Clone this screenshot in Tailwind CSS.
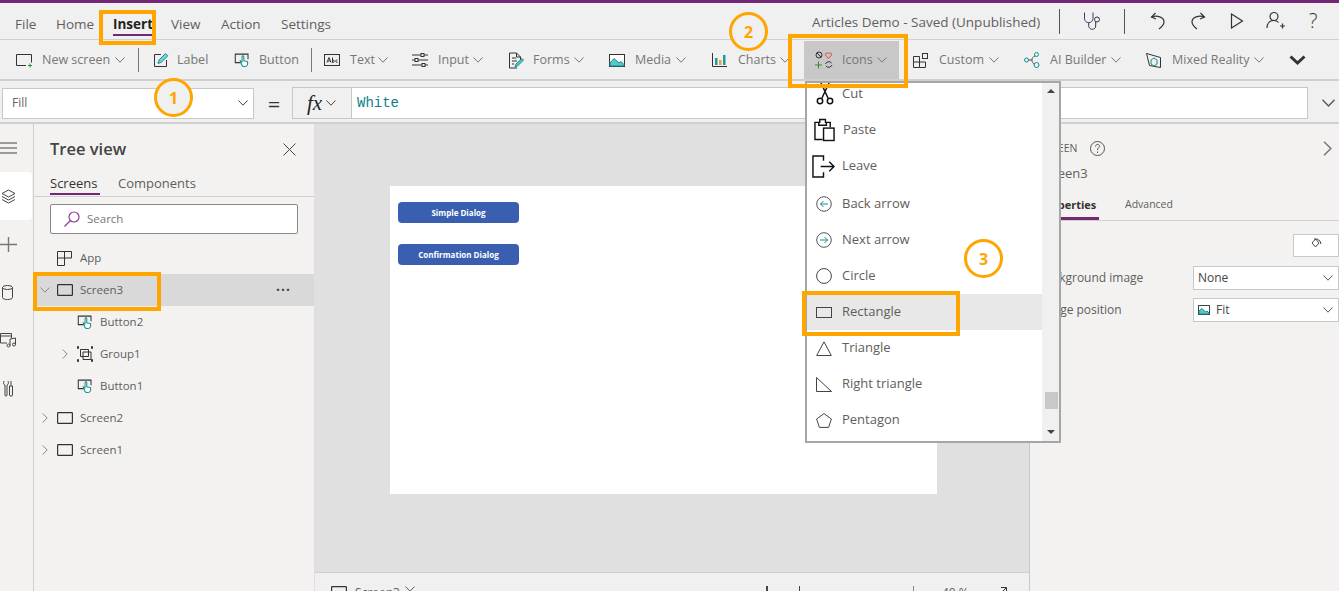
<!DOCTYPE html>
<html lang="en">
<head>
    <meta charset="UTF-8">
    <title>Articles Demo - Power Apps</title>
    <script src="https://cdn.jsdelivr.net/npm/@tailwindcss/browser@4"></script>
</head>
<body class="relative h-screen overflow-hidden bg-[#f0f0f0] text-[13px] text-[#605e5c] font-['Open_Sans',sans-serif]">
    <svg class="hidden">
        <symbol id="chev" viewBox="0 0 10 6"><path d="M.5.5 5 5.2 9.5.5" fill="none" stroke="currentColor"/></symbol>
        <symbol id="chev-r" viewBox="0 0 6 10"><path d="M.7.5 5.2 5 .7 9.5" fill="none" stroke="currentColor"/></symbol>
        <symbol id="btn" viewBox="0 0 20 20">
            <path d="M9 12.5H1.5v-10h15v6" fill="none" stroke="#333" stroke-width="1.2"/>
            <path d="M9.5 5.5v6.2l-2-1.2 1.5 4.5c1 3 6 3 7-.5v-3.2l-4.5-1V5.5c0-1.3-2-1.3-2 0z" fill="#fff" stroke="#0f8f8f" stroke-width="1.2"/>
        </symbol>
        <symbol id="screen" viewBox="0 0 16 12"><rect x=".6" y=".6" width="14.8" height="10.8" rx=".6" fill="none" stroke="#333" stroke-width="1.2"/></symbol>
    </svg>

    <div class="h-[3px] bg-[#742774]"></div>

    <!-- Menu row -->
    <header class="flex items-center h-[37px] border-b border-[#d2d0ce] pl-[15px] pr-[19px] text-[13.5px] text-[#5f5f5f]">
        <nav class="flex items-center pt-[6px]">
            <span class="w-[41px]">File</span>
            <span class="w-[57px]">Home</span>
            <span class="relative w-[58px] font-bold text-[#222]">Insert<span class="absolute left-0 top-[20px] h-[2px] w-[39px] bg-[#742774]"></span></span>
            <span class="w-[50px]">View</span>
            <span class="w-[60px]">Action</span>
            <span>Settings</span>
        </nav>
        <div class="ml-auto flex items-center">
            <span class="w-[247px] whitespace-nowrap pt-[2px]">Articles Demo - Saved (Unpublished)</span>
            <span class="h-[25px] w-px bg-[#555]"></span>
            <svg class="ml-[23px] h-[20px] w-[20px] fill-none stroke-[#333]" viewBox="0 0 20 20"><path d="M1.5 1.5v6c0 5.500 8.500 5.500 8.500 0v-6" stroke="#5b2a6e"/><path d="M5.700 12v2.500c0 5 7 5 7 .5v-4"/><circle cx="14" cy="8.500" r="2.500"/></svg>
            <span class="ml-[21px] h-[25px] w-px bg-[#555]"></span>
            <svg class="ml-[25px] h-[18px] w-[16px] fill-none stroke-[#333]" viewBox="0 0 16 18" stroke-width="1.2"><path d="M5.500 1 1.500 5l4.500 2"/><path d="M1.500 5C7 3 14 5 14 10c0 3-2.500 5-5 7"/></svg>
            <svg class="ml-[24px] h-[18px] w-[16px] fill-none stroke-[#333]" viewBox="0 0 16 18" stroke-width="1.2"><path d="M10.500 1l4 4-4.500 2"/><path d="M14.500 5C9 3 2 5 2 10c0 3 2.500 5 5 7"/></svg>
            <svg class="ml-[24px] h-[16px] w-[14px] fill-none stroke-[#333]" viewBox="0 0 14 16" stroke-width="1.2"><path d="M1.500 1v14l11-7z"/></svg>
            <svg class="ml-[22px] h-[20px] w-[20px] fill-none stroke-[#333]" viewBox="0 0 20 20" stroke-width="1.2"><circle cx="8" cy="5.500" r="4"/><path d="M1 17c0-5 3-7.500 7-7.500 2 0 3.500 .7 4.500 2"/><path d="M14 15h5M16.500 12.500v5"/></svg>
            <span class="ml-[23px] w-[11px] text-[20px] leading-none font-light text-[#333]">?</span>
        </div>
    </header>

    <!-- Insert toolbar -->
    <div class="flex items-center h-[41px] border-b-2 border-[#d2d0ce] pl-[16px] pt-[1px] text-[12.5px] text-[#777] whitespace-nowrap">
        <svg class="h-[16px] w-[16px] fill-none stroke-[#333]" viewBox="0 0 16 16"><path d="M10 13.500H.5v-11h15v8"/><path d="M12 13.500h4M14 11.500v4" stroke="#2e8b3d"/></svg>
        <span class="ml-[10px] w-[73px]">New screen</span>
        <svg class="h-[6px] w-[10px]"><use href="#chev"/></svg>
        <span class="ml-[13px] h-[24px] w-px bg-[#777]"></span>

        <svg class="ml-[14px] h-[16px] w-[16px] fill-none stroke-[#333]" viewBox="0 0 16 16"><path d="M8 2.500H1.500v12h12V8"/><path d="M5 11.500l1-3.500 6.500-6.500 2.300 2.300L8.300 10.300z" fill="#7fcfcf" stroke="#0f8f8f"/></svg>
        <span class="ml-[8px] w-[57px]">Label</span>
        <svg class="h-[17px] w-[17px]"><use href="#btn"/></svg>
        <span class="ml-[8px] w-[39px]">Button</span>
        <span class="ml-[13px] h-[24px] w-px bg-[#777]"></span>

        <svg class="ml-[12px] h-[12px] w-[16px] fill-none stroke-[#333]" viewBox="0 0 16 12"><rect x=".5" y=".5" width="15" height="11"/><path d="M3 8.500 5 3.500l2 5M4 7h2M8.500 3.500v5M8.500 6.500c2-1.500 2.500 2.500 0 2M13.500 6c-2-1-2.500 3 0 2.300"/></svg>
        <span class="ml-[10px] w-[28px]">Text</span>
        <svg class="h-[6px] w-[10px]"><use href="#chev"/></svg>

        <svg class="ml-[24px] h-[16px] w-[16px] fill-none stroke-[#333]" viewBox="0 0 16 16"><path d="M0 3h9M12 3h4M0 8h3M6 8h10M0 13h10M13 13h3"/><rect x="9" y="1.500" width="3" height="3"/><rect x="3" y="6.500" width="3" height="3"/><rect x="10" y="11.500" width="3" height="3"/></svg>
        <span class="ml-[10px] w-[35px]">Input</span>
        <svg class="h-[6px] w-[10px]"><use href="#chev"/></svg>

        <svg class="ml-[25px] h-[17px] w-[16px] fill-none stroke-[#333]" viewBox="0 0 16 17"><path d="M9 16H1.500V1h7l4 4v3M8.500 1v4h4M4 6h4M4 9h5M4 12h2"/><path d="M7 15l1-3 6-5.500 1.500 1.500-6 6z" fill="#5cc5c5" stroke="#0f8f8f"/></svg>
        <span class="ml-[9px] w-[41px]">Forms</span>
        <svg class="h-[6px] w-[10px]"><use href="#chev"/></svg>

        <svg class="ml-[25px] h-[13px] w-[16px] fill-none stroke-[#333]" viewBox="0 0 16 13"><rect x=".5" y=".5" width="15" height="12" fill="#fff"/><path d="M1 12V9l4-4.500L10 9l2-1.500 3 3V12z" fill="#5cc5c5" stroke="#0f8f8f"/></svg>
        <span class="ml-[10px] w-[41px]">Media</span>
        <svg class="h-[6px] w-[10px]"><use href="#chev"/></svg>

        <svg class="ml-[26px] h-[14px] w-[15px]" viewBox="0 0 15 14"><path d="M.5 0v13.500H15" fill="none" stroke="#333"/><path d="M3 5h2.500v7H3z" fill="#1e9aa0"/><path d="M7 7h2.500v5H7z" fill="#e8a33d"/><path d="M11 2h2.500v10H11z" fill="#1e9aa0"/></svg>
        <span class="ml-[11px] w-[42px]">Charts</span>
        <svg class="h-[6px] w-[10px]"><use href="#chev"/></svg>

        <div class="ml-[14px] flex h-[38px] w-[95px] items-center bg-[#c8c8c8] pl-[11px]">
            <svg class="h-[18px] w-[18px]" viewBox="0 0 18 18"><circle cx="4" cy="4" r="3" fill="none" stroke="#333"/><path d="M2 2l4 4" stroke="#333"/><path d="M13.500 7.500 10.500 4c-1-2 2-3 3-1 1-2 4-1 3 1z" fill="none" stroke="#d9503f"/><path d="M0 14h7M3.500 10.500v7" stroke="#2e8b3d"/><path d="M10.500 13a3.500 3.500 0 0 1 6-1M17 14a3.500 3.500 0 0 1-6 1" fill="none" stroke="#333"/></svg>
            <span class="ml-[9px] w-[35px]">Icons</span>
            <svg class="h-[6px] w-[10px]"><use href="#chev"/></svg>
        </div>

        <svg class="ml-[14px] h-[15px] w-[15px] fill-none stroke-[#333]" viewBox="0 0 15 15"><path d="M.5 3.500h6v11h-6zM.5 9h12v5.500h-6"/><rect x="9.500" y=".5" width="5" height="5"/></svg>
        <span class="ml-[11px] w-[50px]">Custom</span>
        <svg class="h-[6px] w-[10px]"><use href="#chev"/></svg>

        <svg class="ml-[25px] h-[16px] w-[16px] fill-none stroke-[#0f8f8f]" viewBox="0 0 16 16"><circle cx="2.500" cy="8" r="2"/><circle cx="12.500" cy="2.500" r="2"/><circle cx="12.500" cy="13" r="2.500"/><path d="M11 4c-4 1-4 7-.5 8M4.500 8H8" stroke="#555"/></svg>
        <span class="ml-[10px] w-[61px]">AI Builder</span>
        <svg class="h-[6px] w-[10px]"><use href="#chev"/></svg>

        <svg class="ml-[25px] h-[15px] w-[15px] fill-none stroke-[#333]" viewBox="0 0 15 15"><path d="M.5 .5l14 4v10l-11-2z"/><path d="M5 7l3-2 3 2v4l-3 2-3-2z" stroke="#0f8f8f"/></svg>
        <span class="ml-[11px] w-[82px]">Mixed Reality</span>
        <svg class="h-[6px] w-[10px]"><use href="#chev"/></svg>

        <svg class="ml-[25px] h-[10px] w-[17px] fill-none stroke-[#333]" viewBox="0 0 17 10" stroke-width="3"><path d="M1.500 1.500 8.500 8l7-6.500"/></svg>
    </div>

    <!-- Formula bar -->
    <div class="flex items-center h-[43px] border-b-2 border-[#d2d0ce] pl-[2px] pt-[3px]">
        <div class="flex h-[31px] w-[252px] items-center justify-between border border-[#c8c8c8] bg-white pl-[9px] pr-[5px] text-[12px] text-[#666]">
            <span>Fill</span>
            <svg class="h-[6px] w-[10px] text-[#444]"><use href="#chev"/></svg>
        </div>
        <span class="ml-[13px] w-[14px] text-center text-[22px] leading-none text-[#333]">=</span>
        <div class="ml-[11px] flex h-[32px] w-[60px] items-center border border-[#c8c8c8] pl-[14px]">
            <span class="font-['Liberation_Serif',serif] text-[21px] italic leading-none text-[#222]">fx</span>
            <svg class="ml-[4px] h-[6px] w-[10px] text-[#444]"><use href="#chev"/></svg>
        </div>
        <div class="flex h-[32px] w-[956px] items-center border-y border-r border-[#c8c8c8] bg-white pl-[5px] font-['Liberation_Mono',monospace] text-[14px] text-[#0e7f85]">White</div>
        <svg class="ml-[12px] h-[8px] w-[17px] text-[#555]"><use href="#chev"/></svg>
    </div>

    <!-- Workspace -->
    <div class="flex h-[467px]">
        <!-- Left rail -->
        <aside class="flex w-[34px] shrink-0 flex-col border-r border-[#d2d0ce] bg-[#f3f2f1]">
            <div class="flex h-[48px] w-[33px] items-center">
                <svg class="h-[12px] w-[17px] fill-none stroke-[#444]" viewBox="0 0 17 12"><path d="M0 1h17M0 6h17M0 11h17"/></svg>
            </div>
            <div class="flex h-[48px] w-[32px] items-center rounded-r-sm bg-white pl-[1px]">
                <svg class="h-[15px] w-[15px] fill-none stroke-[#444]" viewBox="0 0 15 15"><path d="M7.500 1 14 4.500 7.500 8 1 4.500zM1 7.500 7.500 11 14 7.500M1 10.500 7.500 14 14 10.500"/></svg>
            </div>
            <div class="flex h-[48px] items-center">
                <svg class="h-[15px] w-[17px] fill-none stroke-[#777]" viewBox="0 0 17 15" stroke-width="1.4"><path d="M0 7.500h17M8.500 0v15"/></svg>
            </div>
            <div class="flex h-[48px] items-center pl-[2px]">
                <svg class="h-[15px] w-[11px] fill-none stroke-[#444]" viewBox="0 0 11 15"><ellipse cx="5.500" cy="2.500" rx="5" ry="2"/><path d="M.5 2.500v10c0 2.700 10 2.700 10 0v-10"/></svg>
            </div>
            <div class="flex h-[48px] items-center">
                <svg class="h-[15px] w-[17px] fill-none stroke-[#444]" viewBox="0 0 17 15"><path d="M7 10H.5V.5h11V5M.5 3h11"/><circle cx="8.500" cy="12.500" r="1.500"/><circle cx="14" cy="11.500" r="1.500"/><path d="M10 12.500V6l5.500-1v6.500"/></svg>
            </div>
            <div class="flex h-[48px] items-center pl-[3px]">
                <svg class="h-[17px] w-[11px] fill-none stroke-[#444]" viewBox="0 0 11 17"><path d="M1 1c-1 2 0 4 1 4v10c0 1.500 2 1.500 2 0V5c1 0 2-2 1-4M8 1v5M6.500 6h3v9c0 1.500-3 1.500-3 0z"/></svg>
            </div>
        </aside>

        <!-- Tree view -->
        <section class="w-[281px] shrink-0 border-r border-[#e1dfdd] bg-[#f3f2f1]">
            <div class="flex items-center justify-between pl-[16px] pr-[18px] pt-[12px]">
                <h2 class="text-[16.5px] font-semibold leading-[26px] text-[#444]">Tree view</h2>
                <svg class="h-[13px] w-[13px] fill-none stroke-[#444]" viewBox="0 0 13 13"><path d="M.5.500l12 12M12.500.500l-12 12"/></svg>
            </div>
            <div class="mt-[12px] flex h-[23px] border-b border-[#d2d0ce] pl-[16px]">
                <span class="relative w-[68px] text-[#333]">Screens<span class="absolute left-0 top-[19px] h-[2px] w-[50px] bg-[#742774]"></span></span>
                <span>Components</span>
            </div>
            <div class="ml-[16px] mt-[7px] flex h-[30px] w-[248px] items-center rounded-[2px] border border-[#8a8886] bg-white pl-[13px] text-[11.5px] text-[#777]">
                <svg class="h-[16px] w-[16px] fill-none stroke-[#8a3f93]" viewBox="0 0 16 16" stroke-width="1.2"><circle cx="10" cy="6" r="5"/><path d="M6.500 9.500 .5 15.500"/></svg>
                <span class="ml-[7px]">Search</span>
            </div>
            <div class="mt-[8px] text-[11.5px]">
                <div class="flex h-[32px] items-center pl-[23px]">
                    <svg class="h-[15px] w-[15px] fill-none stroke-[#333]" viewBox="0 0 15 15"><path d="M.5.500h14v6.500H7.500v7.500h-7zM.5 7h7V.5"/></svg>
                    <span class="ml-[8px]">App</span>
                </div>
                <div class="flex h-[32px] items-center bg-[#d9d9d9] pl-[6px] pr-[23px]">
                    <svg class="h-[6px] w-[10px] text-[#888]"><use href="#chev"/></svg>
                    <svg class="ml-[7px] h-[12px] w-[16px]"><use href="#screen"/></svg>
                    <span class="ml-[7px]">Screen3</span>
                    <span class="ml-auto text-[14px] font-bold leading-none tracking-[1px] text-[#444]">···</span>
                </div>
                <div class="flex h-[32px] items-center pl-[43px]">
                    <svg class="h-[17px] w-[17px]"><use href="#btn"/></svg>
                    <span class="ml-[6px]">Button2</span>
                </div>
                <div class="flex h-[32px] items-center pl-[28px]">
                    <svg class="h-[10px] w-[6px] text-[#888]"><use href="#chev-r"/></svg>
                    <svg class="ml-[9px] h-[16px] w-[16px] fill-none stroke-[#333]" viewBox="0 0 16 16"><path d="M0 1.500h2M14 1.500h2M0 14.500h2M14 14.500h2" stroke-width="2.5"/><path d="M3.500 3.500h8v7h-8zM6 6h8v7.500H6z"/></svg>
                    <span class="ml-[7px]">Group1</span>
                </div>
                <div class="flex h-[32px] items-center pl-[43px]">
                    <svg class="h-[17px] w-[17px]"><use href="#btn"/></svg>
                    <span class="ml-[6px]">Button1</span>
                </div>
                <div class="flex h-[32px] items-center pl-[8px]">
                    <svg class="h-[10px] w-[6px] text-[#888]"><use href="#chev-r"/></svg>
                    <svg class="ml-[9px] h-[12px] w-[16px]"><use href="#screen"/></svg>
                    <span class="ml-[7px]">Screen2</span>
                </div>
                <div class="flex h-[32px] items-center pl-[8px]">
                    <svg class="h-[10px] w-[6px] text-[#888]"><use href="#chev-r"/></svg>
                    <svg class="ml-[9px] h-[12px] w-[16px]"><use href="#screen"/></svg>
                    <span class="ml-[7px]">Screen1</span>
                </div>
            </div>
        </section>

        <!-- Canvas -->
        <main class="flex w-[715px] shrink-0 flex-col border-r border-[#c8c8c8] bg-[#e0e0e0]">
            <div class="ml-[75px] mt-[62px] flex h-[308px] w-[547px] flex-col gap-[21px] bg-white pl-[8px] pt-[16px]">
                <div class="flex h-[21px] w-[121px] items-center justify-center rounded-[4px] bg-[#3a5fb0] text-[8px] font-bold text-white">Simple Dialog</div>
                <div class="flex h-[21px] w-[121px] items-center justify-center rounded-[4px] bg-[#3a5fb0] text-[8px] font-bold text-white">Confirmation Dialog</div>
            </div>
            <div class="mt-auto flex h-[19px] shrink-0 items-start border-t border-[#d2d0ce] bg-[#f0f0f0] pl-[16px] pt-[13px] text-[12px] leading-[14px]">
                <svg class="h-[12px] w-[16px]"><use href="#screen"/></svg>
                <span class="ml-[8px] w-[50px]">Screen3</span>
                <svg class="h-[6px] w-[10px]"><use href="#chev"/></svg>
                <span class="ml-[351px] h-[12px] w-[2px] bg-[#444]"></span>
                <span class="ml-[31px] h-[12px] w-px bg-[#444]"></span>
                <span class="ml-[113px] h-[12px] w-px bg-[#888]"></span>
                <span class="ml-[28px] w-[50px]">40 %</span>
                <svg class="ml-[4px] h-[12px] w-[12px] fill-none stroke-[#333]" viewBox="0 0 12 12"><path d="M1 11 10 2M5 1.500h5.500V7"/></svg>
            </div>
        </main>

        <!-- Properties panel -->
        <aside class="relative min-w-0 flex-1 bg-[#f3f2f1] pl-[9px] text-[12px] whitespace-nowrap">
            <div class="flex items-center pt-[14px] text-[10.5px] leading-[20px]">
                <span class="w-[51px]">SCREEN</span>
                <svg class="h-[15px] w-[15px] fill-none stroke-[#555]" viewBox="0 0 15 15"><circle cx="7.500" cy="7.500" r="7"/><path d="M5.500 5.500c0-3 4.500-2.500 4-.2-.3 1.500-2 1.700-2 3.700M7.500 10.500v1.500"/></svg>
                <svg class="ml-[218px] h-[17px] w-[9px] text-[#777]"><use href="#chev-r"/></svg>
            </div>
            <div class="mt-[6px] text-[13px] leading-[18px]">Screen3</div>
            <div class="relative mt-[15px] flex h-[23px] text-[11px]">
                <span class="w-[86px] font-bold text-[#333]">Properties<span class="absolute left-0 top-[20px] h-[3px] w-[60px] bg-[#742774]"></span></span>
                <span class="text-[10.5px]">Advanced</span>
            </div>
            <div class="-ml-[9px] h-px bg-[#d2d0ce]"></div>
            <div class="mt-[13px] flex items-center justify-between">
                <span>Fill</span>
                <div class="relative flex h-[23px] w-[46px] justify-center border border-[#c8c8c8] bg-white pt-[3px]">
                    <svg class="h-[10px] w-[11px] fill-none stroke-[#444]" viewBox="0 0 11 10"><path d="M4.500 1 1 5l3.500 4L8 5z"/><path d="M3 1h3l3 2 1 3"/></svg>
                </div>
            </div>
            <div class="mt-[9px] flex items-center justify-between">
                <span>Background image</span>
                <div class="flex h-[24px] w-[146px] items-center justify-between border border-[#c8c8c8] bg-white pl-[4px] pr-[4px] text-[#444]">
                    <span>None</span>
                    <svg class="h-[6px] w-[12px] text-[#555]"><use href="#chev"/></svg>
                </div>
            </div>
            <div class="mt-[8px] flex items-center justify-between">
                <span>Image position</span>
                <div class="flex h-[24px] w-[146px] items-center border border-[#c8c8c8] bg-white pl-[4px] pr-[4px] text-[#444]">
                    <svg class="h-[10px] w-[12px] fill-none stroke-[#444]" viewBox="0 0 12 10"><rect x=".5" y=".5" width="11" height="9" fill="#fff"/><path d="M1 9V6l3-2.500L7.500 7 9 6l2 2v1z" fill="#5cc5c5" stroke="#0f8f8f"/></svg>
                    <span class="ml-[6px]">Fit</span>
                    <svg class="ml-auto h-[6px] w-[12px] text-[#555]"><use href="#chev"/></svg>
                </div>
            </div>
        </aside>
    </div>

    <!-- Icons dropdown -->
    <div class="absolute left-[805px] top-[81px] flex h-[362px] w-[256px] overflow-hidden border-2 border-[#a6a6a6] bg-white text-[13px]">
        <ul class="-mt-[7px] w-[235px] shrink-0">
            <li class="flex h-[36px] items-center pl-[9px]">
                <svg class="h-[22px] w-[18px] fill-none stroke-[#111]" viewBox="0 0 18 22" stroke-width="1.5"><path d="M5 0l7 15M13 0 6 15"/><circle cx="4" cy="18" r="2.700"/><circle cx="14" cy="18" r="2.700"/></svg>
                <span class="ml-[8px]">Cut</span>
            </li>
            <li class="flex h-[36px] items-center pl-[7px]">
                <svg class="h-[24px] w-[21px] fill-none stroke-[#111]" viewBox="0 0 22 24" stroke-width="1.5"><path d="M9 22H1V4h5V1h6v3h5v5"/><path d="M5 4v3h8V4"/><rect x="10" y="10" width="11" height="13" fill="#fff"/></svg>
                <span class="ml-[8px]">Paste</span>
            </li>
            <li class="flex h-[36px] items-center pl-[5px]">
                <svg class="h-[23px] w-[23px] fill-none stroke-[#111]" viewBox="0 0 24 24" stroke-width="1.5"><path d="M12 6V1H1v22h11v-5"/><path d="M9 12h14M18 7l5 5-5 5"/></svg>
                <span class="ml-[7px]">Leave</span>
            </li>
            <li class="mt-[2px] flex h-[36px] items-center pl-[9px]">
                <svg class="h-[16px] w-[16px] fill-none stroke-[#555]" viewBox="0 0 16 16"><circle cx="8" cy="8" r="7.300"/><path d="M12 8H4.500M7.500 5 4.500 8l3 3" stroke="#0f8f8f"/></svg>
                <span class="ml-[10px]">Back arrow</span>
            </li>
            <li class="flex h-[36px] items-center pl-[9px]">
                <svg class="h-[16px] w-[16px] fill-none stroke-[#555]" viewBox="0 0 16 16"><circle cx="8" cy="8" r="7.300"/><path d="M4 8h7.500M8.500 5l3 3-3 3" stroke="#0f8f8f"/></svg>
                <span class="ml-[10px]">Next arrow</span>
            </li>
            <li class="flex h-[36px] items-center pl-[9px]">
                <svg class="h-[16px] w-[16px] fill-none stroke-[#444]" viewBox="0 0 16 16"><circle cx="8" cy="8" r="7.400"/></svg>
                <span class="ml-[10px]">Circle</span>
            </li>
            <li class="flex h-[36px] items-center bg-[#e8e8e8] pl-[9px]">
                <svg class="h-[11px] w-[16px] fill-none stroke-[#444]" viewBox="0 0 16 11"><rect x=".5" y=".5" width="15" height="10"/></svg>
                <span class="ml-[10px]">Rectangle</span>
            </li>
            <li class="flex h-[36px] items-center pl-[9px]">
                <svg class="h-[15px] w-[16px] fill-none stroke-[#444]" viewBox="0 0 16 15"><path d="M8 .8 15.300 14.500H.7z"/></svg>
                <span class="ml-[10px]">Triangle</span>
            </li>
            <li class="flex h-[36px] items-center pl-[9px]">
                <svg class="h-[15px] w-[16px] fill-none stroke-[#444]" viewBox="0 0 16 15"><path d="M.5.500v14h15z"/></svg>
                <span class="ml-[10px]">Right triangle</span>
            </li>
            <li class="flex h-[36px] items-center pl-[9px]">
                <svg class="h-[15px] w-[16px] fill-none stroke-[#444]" viewBox="0 0 16 15"><path d="M8 .6 15.400 6 12.600 14.400H3.400L.6 6z"/></svg>
                <span class="ml-[10px]">Pentagon</span>
            </li>
        </ul>
        <div class="relative flex-1 bg-[#f0f0f0]">
            <span class="absolute left-[5px] top-[6px] h-0 w-0 border-x-[4px] border-b-[4px] border-x-transparent border-b-[#444]"></span>
            <span class="absolute left-[3px] top-[309px] h-[17px] w-[13px] bg-[#c8c8c8]"></span>
            <span class="absolute left-[5px] top-[347px] h-0 w-0 border-x-[4px] border-t-[4px] border-x-transparent border-t-[#444]"></span>
        </div>
    </div>

    <!-- Orange callouts -->
    <div class="absolute left-[99px] top-[10px] h-[35px] w-[57px] border-[4px] border-[#ffa500]"></div>
    <div class="absolute left-[788px] top-[34px] h-[54px] w-[120px] border-[4px] border-[#ffa500]"></div>
    <div class="absolute left-[33px] top-[272px] h-[39px] w-[128px] border-[4px] border-[#ffa500]"></div>
    <div class="absolute left-[802px] top-[291px] h-[45px] w-[158px] border-[4px] border-[#ffa500]"></div>
    <div class="absolute left-[154px] top-[78px] flex h-[39px] w-[39px] items-center justify-center rounded-full border-[3px] border-[#ffa500] bg-[#f0f0f0] text-[16px] font-bold text-[#ffa500]">1</div>
    <div class="absolute left-[729px] top-[12px] flex h-[39px] w-[39px] items-center justify-center rounded-full border-[3px] border-[#ffa500] bg-[#f0f0f0] text-[16px] font-bold text-[#ffa500]">2</div>
    <div class="absolute left-[964px] top-[239px] flex h-[39px] w-[39px] items-center justify-center rounded-full border-[3px] border-[#ffa500] bg-white text-[16px] font-bold text-[#ffa500]">3</div>
</body>
</html>
